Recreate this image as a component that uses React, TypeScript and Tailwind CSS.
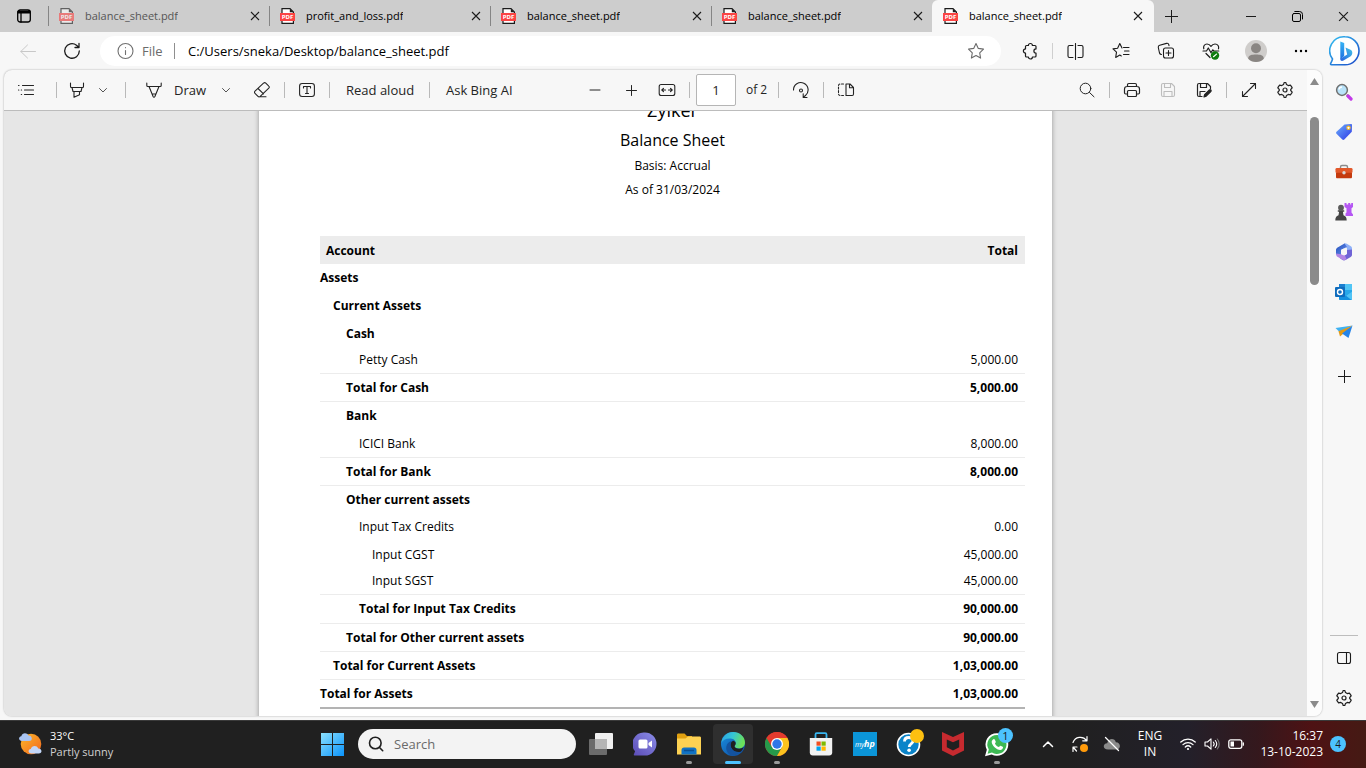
import React from "react";

type IconProps = { children: React.ReactNode; size?: number; className?: string; width?: number };

function Line({ children, size = 16, className = "", width = 1 }: IconProps) {
  return (
    <svg
      width={size}
      height={size}
      viewBox={`0 0 ${size} ${size}`}
      fill="none"
      stroke="currentColor"
      strokeWidth={width}
      strokeLinecap="round"
      strokeLinejoin="round"
      className={`shrink-0 ${className}`}
      aria-hidden="true"
    >
      {children}
    </svg>
  );
}

function IconButton({ label, className, children }: { label: string; className: string; children: React.ReactNode }) {
  return (
    <button type="button" aria-label={label} className={`flex shrink-0 items-center justify-center ${className}`}>
      {children}
    </button>
  );
}

const gearPath =
  "M8.2 1.5h1.6l.7 2.1 1.7 1 2.2-.5 1.1 1.5.7 1.3-1.5 1.6v1l1.5 1.6-.7 1.3-1.1 1.5-2.2-.5-1.7 1-.7 2.1H8.2l-.7-2.1-1.7-1-2.2.5-1.1-1.5-.7-1.3 1.5-1.6v-1L1.8 6.9l.7-1.3 1.1-1.5 2.2.5 1.7-1z";

function Gear() {
  return (
    <Line size={18} width={1.2}>
      <path d={gearPath} />
      <circle cx="9" cy="9" r="2" />
    </Line>
  );
}

function Close({ size = 10 }: { size?: number }) {
  return (
    <svg width={size} height={size} viewBox="0 0 10 10" stroke="#1b1b1b" strokeWidth="1.1" aria-hidden="true">
      <path d="M1 1l8 8M9 1L1 9" />
    </svg>
  );
}

function Plus({ size = 13 }: { size?: number }) {
  return (
    <svg width={size} height={size} viewBox="0 0 13 13" stroke="#1b1b1b" strokeWidth="1" aria-hidden="true">
      <path d="M6.5 0v13M0 6.5h13" />
    </svg>
  );
}

function PdfIcon() {
  return (
    <svg width="16" height="16" viewBox="0 0 16 16" aria-hidden="true" className="shrink-0">
      <path d="M2 .6h8l3.400 3.400v11.400H2z" fill="#fff" stroke="#1b1b1b" strokeWidth="1.2" />
      <path d="M9.800 .6v3.600h3.600z" fill="#1b1b1b" />
      <rect x="0" y="5" width="15" height="8" fill="#fb4444" />
      <text x="7.500" y="11.200" textAnchor="middle" fontSize="6" fontWeight="700" fill="#fff" fontFamily="Noto Sans, sans-serif">
        PDF
      </text>
    </svg>
  );
}

const tabs = [
  { title: "balance_sheet.pdf", faded: true },
  { title: "profit_and_loss.pdf", faded: false },
  { title: "balance_sheet.pdf", faded: false },
  { title: "balance_sheet.pdf", faded: false },
];

function TabStrip() {
  return (
    <header className="flex h-8 shrink-0 items-stretch bg-[#cdcdcd]">
      <IconButton label="Tab actions" className="w-12">
        <Line size={16} width={1.3} className="text-black">
          <rect x="1.7" y="2" width="12.6" height="12" rx="2.5" />
          <path d="M2 3.5h12M2 4.8h12M5 5v9" />
        </Line>
      </IconButton>
      {tabs.map((t, i) => (
        <div key={i} className="flex w-[221px] items-center">
          <span className="h-5 w-px shrink-0 bg-[#858585]" />
          <button
            type="button"
            className={
              t.faded
                ? "ml-2.5 flex min-w-0 flex-1 items-center gap-2.5 text-left text-[11px] leading-4 text-black opacity-60"
                : "ml-2.5 flex min-w-0 flex-1 items-center gap-2.5 text-left text-[11px] leading-4 text-black"
            }
          >
            <PdfIcon />
            <span className="truncate">{t.title}</span>
          </button>
          <IconButton label="Close tab" className="mr-0.5 h-6 w-6">
            <Close />
          </IconButton>
        </div>
      ))}
      <div className="flex w-[222px] items-center rounded-t-md bg-[#f7f7f7]">
        <button type="button" className="ml-[11px] flex min-w-0 flex-1 items-center gap-2.5 text-left text-[11px] leading-4 text-black">
          <PdfIcon />
          <span className="truncate">balance_sheet.pdf</span>
        </button>
        <IconButton label="Close tab" className="mr-1 h-6 w-6">
          <Close />
        </IconButton>
      </div>
      <IconButton label="New tab" className="w-[35px]">
        <Plus />
      </IconButton>
      <div className="ml-auto flex">
        <IconButton label="Minimize" className="w-[46px]">
          <svg width="10" height="10" viewBox="0 0 10 10" stroke="#1b1b1b" aria-hidden="true">
            <path d="M0 5.5h10" />
          </svg>
        </IconButton>
        <IconButton label="Restore" className="w-[46px]">
          <Line size={11} className="text-black">
            <rect x=".5" y="2.5" width="8" height="8" rx="1.5" />
            <path d="M2.8.5h4.700a3 3 0 0 1 3 3v4.500" />
          </Line>
        </IconButton>
        <IconButton label="Close window" className="w-[46px]">
          <Close size={11} />
        </IconButton>
      </div>
    </header>
  );
}

function BingLogo() {
  return (
    <svg width="32" height="32" viewBox="0 0 32 32" aria-hidden="true">
      <defs>
        <linearGradient id="bingRing" x1="0" y1="0" x2="1" y2="1">
          <stop offset="0" stopColor="#35c1f1" />
          <stop offset="1" stopColor="#1b48c8" />
        </linearGradient>
        <linearGradient id="bingB" x1="0" y1="0" x2="0" y2="1">
          <stop offset="0" stopColor="#37b5f5" />
          <stop offset="1" stopColor="#1d6fe0" />
        </linearGradient>
        <linearGradient id="bingB2" x1="0" y1="1" x2="1" y2="0">
          <stop offset="0" stopColor="#2560e0" />
          <stop offset="1" stopColor="#43c5e8" />
        </linearGradient>
      </defs>
      <path
        d="M16 1.800a14 14 0 1 1 0 28H2.400c-.9 0-1-.8-.7-1.400 1-1.800 1.500-2.900 1.800-4.400A14 14 0 0 1 16 1.800z"
        fill="#fff"
        stroke="url(#bingRing)"
        strokeWidth="1.6"
      />
      <path d="M11.300 6.500l3.900 1.500v13l-3.900 3.500z" fill="url(#bingB)" />
      <path d="M16.500 12.500l5 2.300c2.500 1.200 2.300 5 .2 6.500L14.500 25.500c-1.800 1-3.200.2-3.200-1.800l6.900-4.200z" fill="url(#bingB2)" />
    </svg>
  );
}

function AddressRow() {
  return (
    <div className="flex h-[38px] shrink-0 items-center bg-[#f7f7f7] text-[#1b1b1b]">
      <IconButton label="Back" className="ml-1.5 w-11 text-[#c8c8c8]">
        <Line size={16}>
          <path d="M15.500 8.500H.8M7.500 2L.8 8.500l6.700 6.500" />
        </Line>
      </IconButton>
      <IconButton label="Refresh" className="w-11">
        <Line size={18} width={1.3}>
          <path d="M16.300 9A7.300 7.300 0 1 1 13.500 3.200L16 5.500M16 1.500v4h-4" />
        </Line>
      </IconButton>
      <div className="ml-1.5 mr-1.5 flex h-[30px] min-w-0 flex-1 items-center rounded-full bg-white pl-4">
        <Line size={18} className="text-[#707070]" width={1.1}>
          <circle cx="9.500" cy="9" r="7.500" />
          <path d="M9.500 8.500v4M9.500 5.500v.3" />
        </Line>
        <span className="ml-2 w-8 shrink-0 text-[13px] leading-5 text-[#6b6b6b]">File</span>
        <span className="h-4 w-px shrink-0 bg-[#8f8f8f]" />
        <input
          aria-label="Address"
          defaultValue="C:/Users/sneka/Desktop/balance_sheet.pdf"
          className="ml-[13px] h-6 min-w-0 flex-1 bg-transparent text-[13px] leading-5 text-black outline-none"
        />
        <IconButton label="Add to favorites" className="mr-[9px] w-8 text-[#6b6b6b]">
          <Line size={18} width={1.1}>
            <path d="M9 1.500l2.300 4.900 5.200.7-3.800 3.700.9 5.300L9 13.600l-4.600 2.500.9-5.300L1.500 7.100l5.200-.7z" />
          </Line>
        </IconButton>
      </div>
      <IconButton label="Extensions" className="w-[45px]">
        <Line size={18} width={1.2}>
          <path d="M5.500 3.500h1.900a2 2 0 0 1 4 0h2.600c.6 0 1 .4 1 1v2.400a2.100 2.100 0 0 0 0 4.200v2.900c0 .6-.4 1-1 1h-2.600a2 2 0 0 1-4 0H5.500c-.6 0-1-.4-1-1v-2.900a2.100 2.100 0 1 1 0-4.200V4.500c0-.6.4-1 1-1z" />
        </Line>
      </IconButton>
      <span className="h-4 w-px shrink-0 bg-[#cfcfcf]" />
      <IconButton label="Split screen" className="w-[45px]">
        <Line size={17} width={1.1}>
          <path d="M8.500 .5v16M6 2.500H2.500c-1.100 0-1.500.7-1.500 1.500v9c0 .8.400 1.500 1.500 1.500H6M11 2.500h3.500c1.100 0 1.500.7 1.500 1.500v9c0 .8-.4 1.500-1.500 1.500H11" />
        </Line>
      </IconButton>
      <IconButton label="Favorites" className="w-[45px]">
        <Line size={18} width={1.1}>
          <path d="M11.500 5.500H17M12.500 9H17M11.500 12.500H17M10 6L7.800 1.500 5.600 6.300l-4.600.6 3.500 3.300-.8 5.200 4.100-2.300 1.500.8" />
        </Line>
      </IconButton>
      <IconButton label="Collections" className="w-[45px]">
        <Line size={18} width={1.1}>
          <rect x="6.500" y="6" width="10" height="10" rx="2" />
          <path d="M11.500 8.500v5M9 11h5M4.500 12.500c-1 0-1.700-.6-2-1.500L1.300 5.500c-.2-1 .4-1.900 1.400-2.200l6.800-1.900c1.100-.3 2 .3 2.300 1.300l.2 1" />
        </Line>
      </IconButton>
      <IconButton label="Browser essentials" className="w-[45px]">
        <Line size={18} width={1.2}>
          <path d="M1.800 6.800C1 4.300 2.500 2 5 2c1.700 0 3 .9 4 2.300C10 2.900 11.300 2 13 2c2.800 0 4.200 2.500 3.500 4.800M1 9h3.500l1.800-3 2.700 4.800 1.800-3 1 1.200h5M4 11.500l4 4" />
          <circle cx="13" cy="13.500" r="4.200" fill="#107c10" stroke="none" />
          <path d="M11.500 14.700l3-2.600" stroke="#fff" strokeWidth="1.200" />
        </Line>
      </IconButton>
      <IconButton label="Profile" className="w-[45px]">
        <svg width="22" height="22" viewBox="0 0 22 22" aria-hidden="true">
          <circle cx="11" cy="11" r="11" fill="#cfcdcb" />
          <circle cx="11" cy="8.200" r="5" fill="#8a8683" />
          <path d="M3.200 18.700C3.200 15 7 14.500 11 14.500s7.800.5 7.800 4.200A11 11 0 0 1 11 22a11 11 0 0 1-7.800-3.300z" fill="#8a8683" />
        </svg>
      </IconButton>
      <IconButton label="Settings and more" className="w-[45px]">
        <svg width="14" height="4" viewBox="0 0 14 4" aria-hidden="true">
          <circle cx="2" cy="2" r="1.200" />
          <circle cx="7" cy="2" r="1.200" />
          <circle cx="12" cy="2" r="1.200" />
        </svg>
      </IconButton>
      <IconButton label="Bing chat" className="w-[43px]">
        <BingLogo />
      </IconButton>
    </div>
  );
}

function Sep({ className }: { className: string }) {
  return <span className={`h-4 w-px shrink-0 bg-[#b9b9b9] ${className}`} />;
}

function Chevron() {
  return (
    <Line size={10} className="text-[#555]">
      <path d="M1.500 3.500L5 7 8.500 3.500" />
    </Line>
  );
}

function PdfToolbar() {
  return (
    <div className="flex h-10 shrink-0 items-center text-[13px] leading-5 text-[#242424]">
      <div className="flex w-[575px] shrink-0 items-center pl-1.5">
        <IconButton label="Contents" className="h-8 w-8">
          <Line size={18} width={1.2}>
            <path d="M5.500 4.500h11M7.500 9h9M7.500 13.500h9M1.500 4.500h.5M1.500 9h.3M4.300 9h.3M4.300 13.500h.3" />
          </Line>
        </IconButton>
        <Sep className="ml-3.5 mr-1" />
        <IconButton label="Highlight" className="h-8 w-8">
          <Line size={16} width={1.1}>
            <path d="M1.500 1v3.500c0 .7.400 1 1 1h11c.6 0 1-.3 1-1V1M3 5.500l1 4h8l1-4M5 9.500v5.700l5.500-2.500V9.500" />
          </Line>
        </IconButton>
        <IconButton label="Highlight options" className="h-8 w-5">
          <Chevron />
        </IconButton>
        <Sep className="mx-3" />
        <button type="button" className="flex h-8 w-[78px] items-center">
          <span className="flex w-9 items-center pl-2">
            <Line size={16} width={1.1}>
              <path d="M.8 1v2.500c0 .7.500 1 1 1h12.400c.5 0 1-.3 1-1V1M3 4.500l4.100 10c.4.900 1.400.9 1.800 0l4.100-10M6.300 12h3.400" />
            </Line>
          </span>
          Draw
        </button>
        <IconButton label="Draw options" className="h-8 w-5">
          <Chevron />
        </IconButton>
        <IconButton label="Erase" className="ml-2.5 h-8 w-8">
          <Line size={18} width={1.1}>
            <path d="M10.500 2.200L2 10.200c-.7.7-.7 1.600 0 2.200l3 3c.6.6 1.500.6 2.200 0l8.600-8.200c.7-.7.7-1.500 0-2.100l-3-3c-.7-.6-1.600-.6-2.300.1zM5 7.500l5.500 5.300M7 15.800h6" />
          </Line>
        </IconButton>
        <Sep className="mx-1.5" />
        <IconButton label="Add text" className="h-8 w-8">
          <Line size={16} width={1.1}>
            <rect x=".6" y="1.500" width="14.800" height="13" rx="2.500" />
            <path d="M4.500 6V4.500h7V6M8 4.500v7M6.500 11.500h3" />
          </Line>
        </IconButton>
        <Sep className="ml-1.5 mr-4" />
        <button type="button" className="h-8 w-[83px] whitespace-nowrap text-left">Read aloud</button>
        <Sep className="mr-4" />
        <button type="button" className="h-8 whitespace-nowrap text-left">Ask Bing AI</button>
      </div>
      <div className="flex items-center">
        <IconButton label="Zoom out" className="h-8 w-8">
          <Line size={12}>
            <path d="M1 6h10" />
          </Line>
        </IconButton>
        <IconButton label="Zoom in" className="ml-1 h-8 w-8">
          <Line size={13}>
            <path d="M1.500 6.500h10M6.500 1.500v10" />
          </Line>
        </IconButton>
        <IconButton label="Fit to width" className="ml-1 h-8 w-8">
          <Line size={18} width={1.1}>
            <rect x="1.200" y="3.500" width="15.600" height="11" rx="2" />
            <path d="M4 9h3.500M10.500 9H14M5.500 7.300L3.800 9l1.700 1.700M12.500 7.300L14.200 9l-1.700 1.700" />
          </Line>
        </IconButton>
        <Sep className="mx-1.5" />
        <input
          aria-label="Page number"
          defaultValue="1"
          className="h-8 w-10 rounded-xs border border-[#b5b5b5] bg-white text-center text-[13px] leading-5 outline-none"
        />
        <span className="ml-2.5 w-8 whitespace-nowrap text-[12px]">of 2</span>
        <Sep className="mr-1.5" />
        <IconButton label="Rotate" className="h-8 w-8">
          <Line size={18} width={1.1}>
            <path d="M1.500 9a7.300 7.300 0 1 1 12 5.500l-2 1.700M15 16.500h-3.800v-3.800" />
            <circle cx="9" cy="9.500" r="1.500" />
          </Line>
        </IconButton>
        <Sep className="mx-1.5" />
        <IconButton label="Page view" className="h-8 w-8">
          <Line size={18} width={1.1}>
            <path d="M9 3h4l3.500 3.500V13c0 .8-.5 1.500-1.300 1.500H9zM12.500 3v3.700h4" />
            <path d="M6.500 3H3.300C2.200 3 1.500 3.700 1.500 4.800v7.700c0 1.300.7 2 1.800 2h3.200" strokeDasharray="2 1.600" />
          </Line>
        </IconButton>
      </div>
      <div className="ml-auto flex items-center pr-1.5">
        <IconButton label="Find" className="h-8 w-8">
          <Line size={16}>
            <circle cx="6.500" cy="6.500" r="5.300" />
            <path d="M10.500 10.500l4.500 4.300" />
          </Line>
        </IconButton>
        <Sep className="mx-1.5" />
        <div className="flex gap-1">
          <IconButton label="Print" className="h-8 w-8">
            <Line size={18} width={1.2}>
              <path d="M4.500 5.500V4c0-.8.5-1.500 1.300-1.500h6.400c.8 0 1.300.7 1.300 1.500v1.500M4.500 13H2.700c-.7 0-1.200-.5-1.200-1.200V8c0-1.500 1-2.500 2.500-2.500h10c1.500 0 2.500 1 2.500 2.500v3.800c0 .7-.5 1.200-1.200 1.200h-1.800" />
              <rect x="4.500" y="9.500" width="9" height="6" rx="1" />
            </Line>
          </IconButton>
          <IconButton label="Save" className="h-8 w-8 text-[#bdbdbd]">
            <Line size={16} width={1.1}>
              <path d="M1.500 3c0-.8.7-1.500 1.500-1.500h8.500l3 3V13c0 .8-.7 1.500-1.500 1.500H3c-.8 0-1.500-.7-1.500-1.500zM4.500 1.500v4h6v-4M4 14.500v-5h8v5" />
            </Line>
          </IconButton>
          <IconButton label="Save as" className="h-8 w-8">
            <Line size={16} width={1.2}>
              <path d="M6 14.500H3c-.8 0-1.500-.7-1.500-1.500V3c0-.8.7-1.500 1.500-1.500h8.500l3 3v2M4.500 1.500v4h6v-4M4 14.300V9.500h5" />
              <path d="M8 15l.6-2.400 4.800-4.600c1-.8 2.300.4 1.400 1.500l-4.600 4.700z" fill="currentColor" />
            </Line>
          </IconButton>
        </div>
        <Sep className="mx-1.5" />
        <IconButton label="Full screen" className="h-8 w-8">
          <Line size={16} width={1.1}>
            <path d="M1.500 14.500l13-13M9.500 1.500h5v5M1.500 9.500v5h5" />
          </Line>
        </IconButton>
        <IconButton label="PDF settings" className="ml-1 h-8 w-8">
          <Gear />
        </IconButton>
      </div>
    </div>
  );
}

type Row = { name: string; total?: string; pad: string; height: string; bold?: boolean; rule?: string };

const thin = "border-b border-[#ececec]";

const rows: Row[] = [
  { name: "Assets", pad: "pl-0", height: "h-7", bold: true },
  { name: "Current Assets", pad: "pl-[13px]", height: "h-7", bold: true },
  { name: "Cash", pad: "pl-[26px]", height: "h-[27px]", bold: true },
  { name: "Petty Cash", total: "5,000.00", pad: "pl-[39px]", height: "h-[27px]", rule: thin },
  { name: "Total for Cash", total: "5,000.00", pad: "pl-[26px]", height: "h-7", bold: true, rule: thin },
  { name: "Bank", pad: "pl-[26px]", height: "h-7", bold: true },
  { name: "ICICI Bank", total: "8,000.00", pad: "pl-[39px]", height: "h-7", rule: thin },
  { name: "Total for Bank", total: "8,000.00", pad: "pl-[26px]", height: "h-7", bold: true, rule: thin },
  { name: "Other current assets", pad: "pl-[26px]", height: "h-[27px]", bold: true },
  { name: "Input Tax Credits", total: "0.00", pad: "pl-[39px]", height: "h-7" },
  { name: "Input CGST", total: "45,000.00", pad: "pl-[52px]", height: "h-[27px]" },
  { name: "Input SGST", total: "45,000.00", pad: "pl-[52px]", height: "h-[27px]", rule: thin },
  { name: "Total for Input Tax Credits", total: "90,000.00", pad: "pl-[39px]", height: "h-[29px]", bold: true, rule: thin },
  { name: "Total for Other current assets", total: "90,000.00", pad: "pl-[26px]", height: "h-7", bold: true, rule: thin },
  { name: "Total for Current Assets", total: "1,03,000.00", pad: "pl-[13px]", height: "h-7", bold: true, rule: thin },
  { name: "Total for Assets", total: "1,03,000.00", pad: "pl-0", height: "h-[29px]", bold: true, rule: "border-b-2 border-[#b3b3b3]" },
];

function DocumentPage() {
  return (
    <article className="mx-auto -mt-[13px] min-h-[900px] w-[793px] bg-white pl-[61px] pr-[27px] font-['Open_Sans','Noto_Sans',sans-serif] text-black shadow-[0_0_5px_rgba(0,0,0,0.35)]">
      <div className="text-center text-[12px] leading-6">
        <p className="text-[18px] font-medium">Zylker</p>
        <h1 className="mt-1.5 text-[16px]">Balance Sheet</h1>
        <p className="mt-0.5">Basis: Accrual</p>
        <p>As of 31/03/2024</p>
      </div>
      <table className="mt-[34px] w-full border-separate border-spacing-0 text-[12px] leading-4">
        <thead>
          <tr className="bg-[#ececec]">
            <th className="h-7 pl-1.5 pt-0.5 text-left font-bold">Account</th>
            <th className="h-7 pr-[7px] pt-0.5 text-right font-bold">Total</th>
          </tr>
        </thead>
        <tbody>
          {rows.map((r) => (
            <tr key={r.name} className={r.bold ? "font-bold" : "font-normal"}>
              <td className={`${r.height} ${r.pad} ${r.rule ?? ""}`}>{r.name}</td>
              <td className={`${r.height} pr-[7px] text-right ${r.rule ?? ""}`}>{r.total}</td>
            </tr>
          ))}
        </tbody>
      </table>
    </article>
  );
}

function Scrollbar() {
  return (
    <div className="flex w-[15px] shrink-0 flex-col items-center bg-[#fcfcfc] py-2">
      <svg width="9" height="7" viewBox="0 0 9 7" aria-hidden="true">
        <path d="M4.500 0L9 7H0z" fill="#8b8b8b" />
      </svg>
      <div className="mt-8 h-[168px] w-[9px] rounded-full bg-[#8b8b8b]" />
      <svg width="9" height="7" viewBox="0 0 9 7" aria-hidden="true" className="mt-auto">
        <path d="M0 0h9L4.500 7z" fill="#8b8b8b" />
      </svg>
    </div>
  );
}

function SideRail() {
  return (
    <aside className="flex w-11 shrink-0 flex-col items-center pb-0.5 pt-0.5">
      <IconButton label="Search" className="h-10 w-11">
        <svg width="18" height="18" viewBox="0 0 18 18" aria-hidden="true">
          <path d="M12 12l1.500 1.500" stroke="#777" strokeWidth="2.500" />
          <path d="M13 13l3 3" stroke="#c239e8" strokeWidth="3.200" strokeLinecap="round" />
          <circle cx="7" cy="7" r="5.400" fill="#b9e3fa" stroke="#707070" strokeWidth="1.500" />
          <path d="M4 6.500A3 3 0 0 1 7 4" stroke="#fff" strokeWidth="1.400" fill="none" />
        </svg>
      </IconButton>
      <IconButton label="Shopping" className="h-10 w-11">
        <svg width="18" height="18" viewBox="0 0 18 18" aria-hidden="true">
          <defs>
            <linearGradient id="tag" x1="0" y1="0" x2="1" y2="1">
              <stop offset="0" stopColor="#6db0fb" />
              <stop offset="1" stopColor="#2c35e6" />
            </linearGradient>
          </defs>
          <path d="M9.500 1.500L16 1c.7 0 1 .4 1 1l-.2 6.800L9.300 16.500c-.6.6-1.300.6-2 0L1.500 10.800c-.6-.6-.6-1.400 0-2z" fill="url(#tag)" />
          <circle cx="13.500" cy="4.800" r="1.700" fill="#fff" stroke="#f5b921" strokeWidth="1.100" />
        </svg>
      </IconButton>
      <IconButton label="Tools" className="h-10 w-11">
        <svg width="18" height="18" viewBox="0 0 18 18" aria-hidden="true">
          <path d="M5.500 5.500V4c0-1 .5-1.500 1.500-1.500h4c1 0 1.500.5 1.500 1.500v1.500" stroke="#8b8b8b" strokeWidth="1.400" fill="none" />
          <rect x=".5" y="5" width="17" height="5" rx="1.300" fill="#e2582a" />
          <path d="M1 9.800h16v4.200c0 .8-.5 1.300-1.300 1.300H2.300c-.8 0-1.300-.5-1.300-1.300z" fill="#c43a0e" />
          <circle cx="9" cy="9.800" r="1.700" fill="#d8d8d8" />
        </svg>
      </IconButton>
      <IconButton label="Games" className="h-10 w-11">
        <svg width="18" height="18" viewBox="0 0 18 18" aria-hidden="true">
          <path d="M9.500 0h2v1.600h1.700V0h2v1.600h1V0H18v4l-1.500 1.200v4.300l1.500 2v1.500h-7.500v-2.500l1-1V5.200L9.500 4z" fill="#b556f3" />
          <circle cx="6" cy="4.700" r="2.900" fill="#5a5a5a" />
          <path d="M2.800 7.300h6.400v1.500H7.900l.6 3.400c2.200.8 3.200 2.400 3.200 5.300H.3c0-2.900 1-4.500 3.200-5.300l.6-3.400H2.800z" fill="#454545" />
        </svg>
      </IconButton>
      <IconButton label="Microsoft 365" className="h-10 w-11">
        <svg width="18" height="18" viewBox="0 0 18 18" aria-hidden="true">
          <defs>
            <linearGradient id="m365" x1="0" y1="0" x2="1" y2="1">
              <stop offset="0" stopColor="#1f4fb8" />
              <stop offset="1" stopColor="#6d8ff0" />
            </linearGradient>
          </defs>
          <path d="M9 .5C10 .1 11 .3 11.800.8l3.700 2.200C16.500 3.600 17 4.500 17 5.500v6l-5-2.700V5.500z" fill="#8fb1f8" />
          <path d="M9.500.4L2.600 4.400C1.500 5 1 6 1 7v4.500l5 .5V6.800L12 4z" fill="url(#m365)" />
          <path d="M17 6.500v5.300c0 .9-.5 1.600-1.300 2.100L10.500 17c-1 .6-2 .6-3 0L5 15.300l7-4.300V7z" fill="#6f63d6" />
          <path d="M1 10.500c0 1.800.7 2.800 1.500 3.300l5 3c1 .6 2 .5 3 0l1-.6-1.500-3.700L6 11.200z" fill="#b184e4" />
          <path d="M9 5.600l3 1.700v3.400l-3 1.700-3-1.700V7.300z" fill="#f7f7f7" />
        </svg>
      </IconButton>
      <IconButton label="Outlook" className="h-10 w-11">
        <svg width="18" height="18" viewBox="0 0 18 18" aria-hidden="true">
          <rect x="4" y="1" width="13" height="12" rx="1" fill="#28a8ea" />
          <rect x="10" y="1" width="7" height="6" fill="#50c5f5" />
          <rect x="4" y="1" width="6" height="4" fill="#1a7fd0" />
          <path d="M4 9l6.500 4L17 8.500V16c0 .6-.4 1-1 1H5c-.6 0-1-.4-1-1z" fill="#1490df" />
          <path d="M17 8.500V16c0 .5-.2.800-.5.900L11 12.700z" fill="#4fc3f5" />
          <rect x="0" y="4" width="10" height="10" rx="1" fill="#0f6cbd" />
          <circle cx="5" cy="9" r="2.500" fill="none" stroke="#fff" strokeWidth="1.400" />
        </svg>
      </IconButton>
      <IconButton label="Drop" className="h-10 w-11">
        <svg width="18" height="16" viewBox="0 0 18 16" aria-hidden="true">
          <path d="M17.500 1.500L.5 4 4.500 8z" fill="#3fb2f2" />
          <path d="M17.500 1.500L3.500 7.300 5 12.500 8 10z" fill="#e59a13" />
          <path d="M17.500 1.500L7 9.500l6.500 4.500z" fill="#2584e8" />
        </svg>
      </IconButton>
      <IconButton label="Customize" className="mt-1 h-10 w-11">
        <Plus size={13} />
      </IconButton>
      <div className="mb-0.5 mt-auto h-px w-7 bg-[#bdbdbd]" />
      <IconButton label="Hide sidebar" className="h-10 w-11 text-[#1b1b1b]">
        <Line size={16} width={1.1}>
          <rect x="1.500" y="2.500" width="13" height="11" rx="2" />
          <path d="M10.500 2.500v11" />
        </Line>
      </IconButton>
      <IconButton label="Sidebar settings" className="h-10 w-11 text-[#1b1b1b]">
        <Gear />
      </IconButton>
    </aside>
  );
}

function EdgeLogo() {
  return (
    <svg width="24" height="24" viewBox="0 0 24 24" aria-hidden="true">
      <defs>
        <linearGradient id="edgeTop" x1="0" y1="0" x2="1" y2=".3">
          <stop offset="0" stopColor="#2a9fe5" />
          <stop offset=".5" stopColor="#35c5d6" />
          <stop offset="1" stopColor="#6be05a" />
        </linearGradient>
        <linearGradient id="edgeLow" x1="0" y1="0" x2="1" y2="1">
          <stop offset="0" stopColor="#1b8fe0" />
          <stop offset="1" stopColor="#0c4a9e" />
        </linearGradient>
      </defs>
      <circle cx="12" cy="12" r="12" fill="url(#edgeLow)" />
      <path d="M.3 11C1 4.500 6 0 12 0c7 0 12 5 12 10.500 0 3.500-2.500 6-6 6-2.800 0-4.500-1.200-4.500-2.300 0-.9 1.200-1.300 1.200-3.400C14.700 8 11.800 6.500 8.500 6.500 4.500 6.500 1.500 8.500.3 11z" fill="url(#edgeTop)" />
      <path d="M9.500 12c.2-1.700 1.300-2.800 2.700-3.300 1.600.4 2.500 1.400 2.500 2.700 0 1.500-1.100 2-1.100 2.900 0 1.200 1.800 2.400 4.600 2.400 1.800 0 3.300-.6 4.500-1.700-.6 1.800-1.700 3.600-3.400 5C13 21 9 16.500 9.500 12z" fill="#202020" />
      <path d="M9.500 12c-.4 5 4.500 9 9.900 7.800C17 22 14.500 23.800 11 23.800 6 22 4.500 17 5.500 14c.6-2.800 3-5 6.700-5.300-1.500.5-2.500 1.600-2.700 3.300z" fill="#14539f" />
    </svg>
  );
}

function ChromeLogo() {
  return (
    <svg width="24" height="24" viewBox="0 0 24 24" aria-hidden="true">
      <circle cx="12" cy="12" r="12" fill="#e33b2e" />
      <path d="M1.600 6a12 12 0 0 0 10.400 18l5.200-9z" fill="#26994a" />
      <path d="M22.400 6A12 12 0 0 1 12 24l5.200-9L12 6z" fill="#fcc31e" />
      <path d="M1.600 6A12 12 0 0 1 22.400 6H12l-5.200 9z" fill="#e33b2e" />
      <circle cx="12" cy="12" r="6" fill="#fff" />
      <circle cx="12" cy="12" r="4.700" fill="#2f76e8" />
    </svg>
  );
}

const apps: { name: string; state?: "open" | "active"; icon: React.ReactNode }[] = [
  {
    name: "Task view",
    icon: (
      <svg width="24" height="24" viewBox="0 0 24 24" aria-hidden="true">
        <rect x="6" y="1" width="18" height="16" rx="1" fill="#f0f0f0" />
        <rect x="0" y="7" width="18" height="16" rx="1" fill="#6b6b6b" />
        <rect x="6" y="7" width="12" height="10" fill="#b5b5b5" />
      </svg>
    ),
  },
  {
    name: "Chat",
    icon: (
      <svg width="24" height="24" viewBox="0 0 24 24" aria-hidden="true">
        <defs>
          <linearGradient id="chat" x1="0" y1="1" x2="1" y2="0">
            <stop offset="0" stopColor="#5b4bb5" />
            <stop offset="1" stopColor="#8b8de8" />
          </linearGradient>
        </defs>
        <path d="M12 .5a11.500 11.500 0 1 1 0 23H1.500c-.8 0-.9-.7-.6-1.200l1.200-3A11.500 11.500 0 0 1 12 .5z" fill="url(#chat)" />
        <rect x="5.500" y="7.500" width="9" height="9" rx="1.500" fill="#fff" />
        <path d="M15.500 11l3.500-2.500v7L15.500 13z" fill="#fff" />
      </svg>
    ),
  },
  {
    name: "File Explorer",
    state: "open",
    icon: (
      <svg width="24" height="24" viewBox="0 0 24 24" aria-hidden="true">
        <path d="M0 3c0-1 .6-1.500 1.500-1.500h6L10 4h5v5H0z" fill="#e0a010" />
        <path d="M0 6.500h8.500L11 4.500h11.500c1 0 1.500.5 1.500 1.500v16.500H0z" fill="#fdd253" />
        <path d="M4.500 22.500V18c0-1.500 1-2.500 2.500-2.500h10c1.500 0 2.500 1 2.500 2.500v4.500z" fill="#1173c4" />
        <path d="M7 18.500h10" stroke="#0b4f91" strokeWidth="1.500" />
      </svg>
    ),
  },
  { name: "Microsoft Edge", state: "active", icon: <EdgeLogo /> },
  { name: "Google Chrome", state: "open", icon: <ChromeLogo /> },
  {
    name: "Microsoft Store",
    icon: (
      <svg width="24" height="24" viewBox="0 0 24 24" aria-hidden="true">
        <path d="M6.500 6V2.500c0-.8.4-1.300 1.200-1.300h8.600c.8 0 1.200.5 1.200 1.300V6" fill="none" stroke="#38b6f1" strokeWidth="1.800" />
        <path d="M.8 6h22.400v14.500c0 1.800-1.200 3-3 3H3.800c-1.800 0-3-1.200-3-3z" fill="#f2f2f2" />
        <rect x="7.500" y="9.500" width="4.200" height="4.200" fill="#f25022" />
        <rect x="12.500" y="9.500" width="4.200" height="4.200" fill="#7fba00" />
        <rect x="7.500" y="14.500" width="4.200" height="4.200" fill="#00a4ef" />
        <rect x="12.500" y="14.500" width="4.200" height="4.200" fill="#ffb900" />
      </svg>
    ),
  },
  {
    name: "myHP",
    icon: (
      <svg width="24" height="24" viewBox="0 0 24 24" aria-hidden="true">
        <rect width="24" height="24" fill="#0b95d8" />
        <text x="2" y="14.500" fontSize="7" fontStyle="italic" fill="#fff" fontFamily="Open Sans, sans-serif">my</text>
        <text x="11" y="15" fontSize="9" fontWeight="700" fontStyle="italic" fill="#fff" fontFamily="Open Sans, sans-serif">hp</text>
      </svg>
    ),
  },
  {
    name: "HP Support Assistant",
    icon: (
      <svg width="30" height="30" viewBox="0 0 30 30" aria-hidden="true">
        <circle cx="14.500" cy="15.500" r="11" fill="#0b84c9" stroke="#fff" strokeWidth="1.600" />
        <path d="M10.500 12.500c0-2.600 1.700-4 4.200-4 2.600 0 4.300 1.400 4.300 3.500 0 3-3.800 2.900-3.800 5.900" fill="none" stroke="#fff" strokeWidth="2.800" />
        <circle cx="15.100" cy="21.200" r="1.800" fill="#fff" />
        <circle cx="23" cy="7" r="7" fill="#fdc010" />
      </svg>
    ),
  },
  {
    name: "McAfee",
    icon: (
      <svg width="22" height="24" viewBox="0 0 22 24" aria-hidden="true">
        <path d="M0 0l11 5L22 0v18.500L11 24 0 18.500z" fill="#c62a2f" />
        <path d="M4.800 7.500L11 10.300l6.200-2.800v7.800L11 18.500l-6.200-3.200z" fill="#202020" />
      </svg>
    ),
  },
  {
    name: "WhatsApp",
    state: "open",
    icon: (
      <svg width="32" height="32" viewBox="0 0 32 32" aria-hidden="true">
        <path d="M16 5.200a11.300 11.300 0 1 1-5.300 21.300L4 28.200l1.800-6.400A11.300 11.300 0 0 1 16 5.200z" fill="#fff" />
        <path d="M16 7a9.500 9.500 0 1 1-5 17.600l-4.400 1.200 1.200-4.300A9.500 9.500 0 0 1 16 7z" fill="#3db954" />
        <path d="M11.700 11.700c1-1 1.900-.7 2.300.2l.8 1.900c.2.600-.9 1.300-.8 1.900.8 1.600 2 2.600 3.700 3.300.6.1 1.200-1.500 1.800-1.300l2.200 1.100c.9.500-.2 3-2.200 3.100-3.700.3-8.800-4.800-8.800-8 0-.9.500-1.700 1-2.200z" fill="#fff" />
        <circle cx="24.500" cy="7.500" r="7.500" fill="#4cc2ff" />
        <text x="24.500" y="11.500" textAnchor="middle" fontSize="11" fill="#1b1b1b" fontFamily="Open Sans, sans-serif">1</text>
      </svg>
    ),
  },
];

function Taskbar() {
  return (
    <footer className="flex h-12 shrink-0 items-center bg-[linear-gradient(90deg,#202020_0%,#202020_78%,#23202a_87%,#34181d_92%,#4e1214_96%,#451a14_100%)] text-[11px] leading-4 text-white shadow-[inset_0_1px_0_#3a3a3a]">
      <button type="button" className="flex w-[310px] items-center gap-2 pl-[18px] text-left">
        <svg width="24" height="24" viewBox="0 0 24 24" aria-hidden="true">
          <defs>
            <linearGradient id="sun" x1="0" y1="0" x2="1" y2="1">
              <stop offset="0" stopColor="#fbb829" />
              <stop offset="1" stopColor="#f2671f" />
            </linearGradient>
          </defs>
          <circle cx="13" cy="12" r="10.300" fill="url(#sun)" />
          <path d="M4 9c-3.500 0-4-4.500-.7-4.800C4 .5 9 0 10.500 3.500c4 0 4.500 5.500.8 5.500z" fill="#a9c4f2" />
          <path d="M13.500 21.500c-3.500 0-4-4.300-.7-4.600.8-3.400 6-4.300 7.500-.4 4 0 4.300 5 .5 5z" fill="#c3d6f7" />
        </svg>
        <span>
          <span className="block">33°C</span>
          <span className="block text-[#d0d0d0]">Partly sunny</span>
        </span>
      </button>
      <IconButton label="Start" className="h-10 w-11">
        <svg width="24" height="24" viewBox="0 0 24 24" aria-hidden="true">
          <defs>
            <linearGradient id="win" x1="0" y1="0" x2="1" y2="1">
              <stop offset="0" stopColor="#8be0fd" />
              <stop offset="1" stopColor="#0a93fb" />
            </linearGradient>
          </defs>
          <path d="M1 1h11v11H1zM13 1h11v11H13zM1 13h11v11H1zM13 13h11v11H13z" fill="url(#win)" />
        </svg>
      </IconButton>
      <label className="ml-1 flex h-[30px] w-[218px] items-center rounded-full bg-[#f3f3f3] pl-2.5 text-[#1f1f1f]">
        <Line size={16} width={1.6}>
          <circle cx="7.300" cy="7" r="5.800" />
          <path d="M11.500 11.500l3.200 3.200" />
        </Line>
        <input
          aria-label="Search"
          placeholder="Search"
          className="ml-2.5 w-40 bg-transparent text-[13px] leading-5 outline-none placeholder:text-[#6a6a6a]"
        />
      </label>
      <nav className="ml-[3px] flex">
        {apps.map((a) => (
          <button
            key={a.name}
            type="button"
            aria-label={a.name}
            className={
              a.state === "active"
                ? "relative mx-0.5 flex h-10 w-10 items-center justify-center rounded-sm bg-[#2f2f2f]"
                : "relative mx-0.5 flex h-10 w-10 items-center justify-center"
            }
          >
            {a.icon}
            {a.state === "active" && <span className="absolute bottom-0 h-[3px] w-4 rounded-full bg-[#4cc2ff]" />}
            {a.state === "open" && <span className="absolute bottom-0 h-[3px] w-1.5 rounded-full bg-[#9a9a9a]" />}
          </button>
        ))}
      </nav>
      <div className="ml-auto flex items-center pr-5 text-[12px]">
        <IconButton label="Show hidden icons" className="h-10 w-8">
          <Line size={12} width={1.5}>
            <path d="M1.500 8.500L6 4l4.500 4.500" />
          </Line>
        </IconButton>
        <IconButton label="Updates" className="h-10 w-8">
          <Line size={18} width={1.2}>
            <path d="M2 7.500C4 1.500 12 .5 15.500 5.500M16 1.500v4.300h-4.300M2 16.500v-4.500h4M2.500 12.500l3 3.500" />
            <circle cx="13" cy="13" r="4" fill="#ff9a0a" stroke="none" />
          </Line>
        </IconButton>
        <IconButton label="OneDrive" className="h-10 w-8">
          <Line size={18} width={1.3}>
            <path d="M5 14.500c-5.500 0-5.500-6-.8-6.300C5.500 2.500 12 3 12.800 7.200c5.400 0 5.400 7.300.5 7.300z" fill="#8b8b8b" stroke="none" />
            <path d="M2.500 2.500l13 13" />
          </Line>
        </IconButton>
        <button type="button" className="w-11 text-center">
          <span className="block">ENG</span>
          <span className="block">IN</span>
        </button>
        <IconButton label="Network" className="ml-1 h-10 w-6">
          <Line size={16} width={1.3}>
            <path d="M.8 6a10.500 10.500 0 0 1 14.400 0M3 8.600a7.200 7.200 0 0 1 10 0M5.300 11a4 4 0 0 1 5.400 0" />
            <circle cx="8" cy="13" r="1.100" fill="currentColor" stroke="none" />
          </Line>
        </IconButton>
        <IconButton label="Volume" className="h-10 w-6">
          <Line size={16} width={1.100}>
            <path d="M1 6h2.500L7 2.800v10.400L3.500 10H1zM9.300 6a3 3 0 0 1 0 4M11.300 4.500a5.500 5.500 0 0 1 0 7" />
            <path d="M13.300 3a7.500 7.500 0 0 1 0 10" stroke="#777" />
          </Line>
        </IconButton>
        <IconButton label="Battery" className="h-10 w-6">
          <Line size={16} width={1.3}>
            <rect x=".8" y="3.800" width="13" height="8.500" rx="2" />
            <rect x="2.500" y="5.500" width="3.500" height="5" fill="currentColor" stroke="none" />
            <path d="M15.300 7v2.200" />
          </Line>
        </IconButton>
        <button type="button" className="ml-2 w-[67px] whitespace-nowrap text-right">
          <span className="block">16:37</span>
          <span className="block">13-10-2023</span>
        </button>
        <span className="ml-[7px] flex h-4 w-4 items-center justify-center rounded-full bg-[#4cc2ff] text-[10px] text-[#1b1b1b]">4</span>
      </div>
    </footer>
  );
}

export default function App() {
  return (
    <div className="flex h-screen flex-col overflow-hidden bg-[#f7f7f7] font-['Open_Sans','Noto_Sans',sans-serif]">
      <TabStrip />
      <AddressRow />
      <div className="flex min-h-0 flex-1">
        <main className="mb-1 ml-1 flex min-w-0 flex-1 overflow-hidden rounded-lg bg-[#f7f7f7] shadow-[0_0_2px_rgba(0,0,0,0.35)]">
          <div className="flex min-w-0 flex-1 flex-col">
            <PdfToolbar />
            <div className="min-h-0 flex-1 overflow-hidden border-t border-[#bcbcbc] bg-[#e6e6e6]">
              <DocumentPage />
            </div>
          </div>
          <Scrollbar />
        </main>
        <SideRail />
      </div>
      <Taskbar />
    </div>
  );
}
